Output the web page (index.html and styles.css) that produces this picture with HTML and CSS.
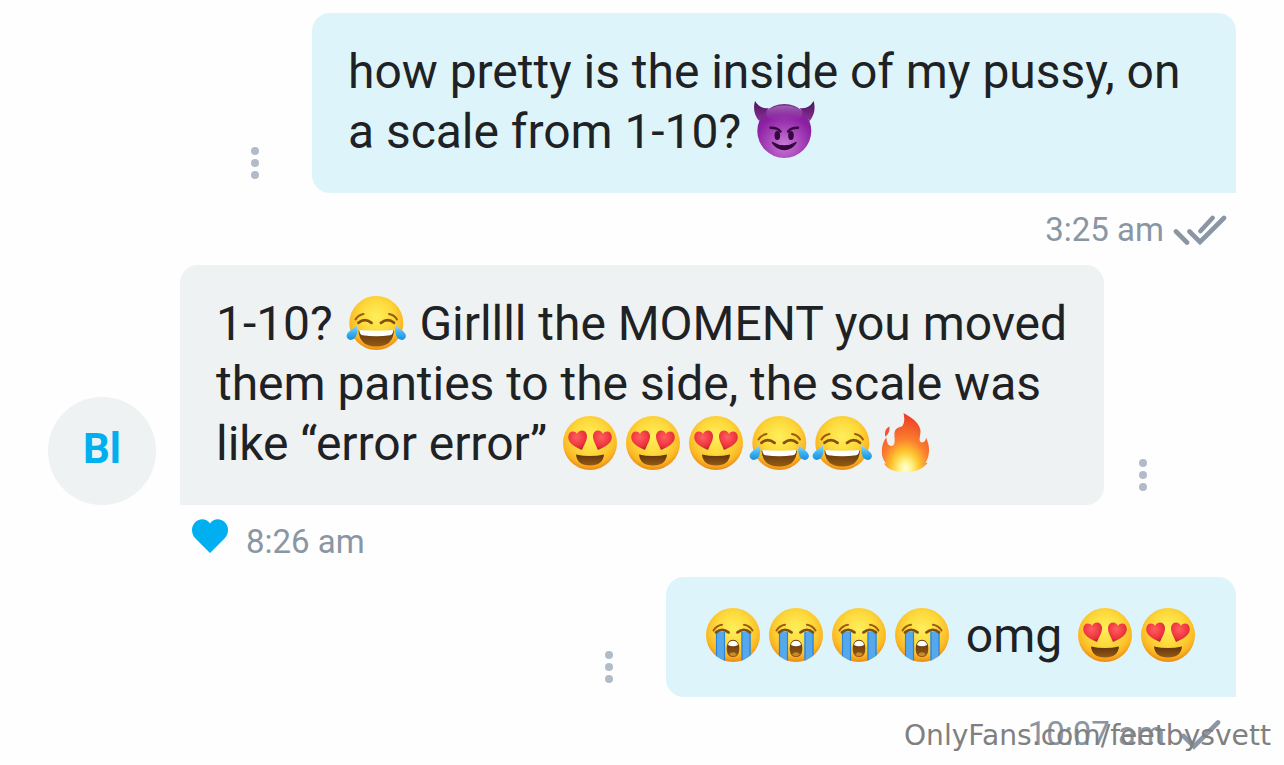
FILE: index.html
```
<!DOCTYPE html>
<html lang="en">
<head>
    <meta charset="UTF-8">
    <meta name="viewport" content="width=device-width, initial-scale=1.0">
    <title>Messages</title>
    <link rel="stylesheet" href="styles.css">
</head>
<body>
    <!-- emoji and icon shapes -->
    <svg class="sprite" width="0" height="0">
        <defs>
            <radialGradient id="yellow" cx="50%" cy="38%" r="64%">
                <stop offset="0" stop-color="#ffef5c"/>
                <stop offset=".5" stop-color="#fdd83a"/>
                <stop offset=".8" stop-color="#fbb724"/>
                <stop offset="1" stop-color="#e8800e"/>
            </radialGradient>
            <radialGradient id="purple" cx="50%" cy="76%" r="74%">
                <stop offset="0" stop-color="#c97ad6"/>
                <stop offset=".4" stop-color="#aa48bb"/>
                <stop offset=".75" stop-color="#8b1fa3"/>
                <stop offset="1" stop-color="#742a8a"/>
            </radialGradient>
            <linearGradient id="shine" x1="0" y1="0" x2="0" y2="1">
                <stop offset="0" stop-color="#b88ac6" stop-opacity=".6"/>
                <stop offset="1" stop-color="#a040b0" stop-opacity="0"/>
            </linearGradient>
            <linearGradient id="horn" x1="0" y1="0" x2="0" y2="1">
                <stop offset="0" stop-color="#4a1458"/>
                <stop offset="1" stop-color="#8b2f98"/>
            </linearGradient>
            <linearGradient id="tear" x1="0" y1="0" x2="0" y2="1">
                <stop offset="0" stop-color="#9adcf8"/>
                <stop offset=".5" stop-color="#3fb4f0"/>
                <stop offset="1" stop-color="#1590e0"/>
            </linearGradient>
            <radialGradient id="red" cx="45%" cy="35%" r="65%">
                <stop offset="0" stop-color="#ff5f60"/>
                <stop offset=".7" stop-color="#ee343e"/>
                <stop offset="1" stop-color="#c91f2b"/>
            </radialGradient>
            <linearGradient id="mouth" x1="0" y1="0" x2="0" y2="1">
                <stop offset="0" stop-color="#5d340c"/>
                <stop offset="1" stop-color="#965a14"/>
            </linearGradient>
            <radialGradient id="fire" cx="50%" cy="94%" r="88%">
                <stop offset="0" stop-color="#fffde6"/>
                <stop offset=".14" stop-color="#fff58a"/>
                <stop offset=".34" stop-color="#ffc52e"/>
                <stop offset=".56" stop-color="#fb802f"/>
                <stop offset="1" stop-color="#ee4026"/>
            </radialGradient>
            <clipPath id="face"><circle cx="31" cy="28" r="27"/></clipPath>
        </defs>

        <symbol id="devil" viewBox="0 0 63 60">
            <path d="M2-2C0 5 1 12 6 18L16 5C9 6 5 3 2-2Z" fill="url(#horn)"/>
            <path d="M60.600-2C62.600 5 61.600 12 56.600 18L46.600 5C53.600 6 57.600 3 60.600-2Z" fill="url(#horn)"/>
            <circle cx="31.300" cy="28" r="27" fill="url(#purple)"/>
            <ellipse cx="31.300" cy="11" rx="18" ry="8.500" fill="url(#shine)"/>
            <path d="M17.500 24.800Q24 24.500 27.500 28.500M45 24.800Q38.500 24.500 35 28.500" class="line devil-line"/>
            <ellipse cx="24.300" cy="32.600" rx="2.800" ry="4.500" fill="#35083f"/>
            <ellipse cx="38" cy="32.600" rx="2.800" ry="4.500" fill="#35083f"/>
            <path d="M19.500 39.500Q31.300 46.500 43 39.500Q38.500 46.500 31.300 46.500T19.500 39.500Z" class="smile"/>
        </symbol>

        <symbol id="joy" viewBox="0 0 63 60">
            <circle cx="31.300" cy="28" r="27" fill="url(#yellow)"/>
            <path d="M10.500 24.500Q13 20 18.500 19M52 24.500Q49.500 20 44 19" class="line brow"/>
            <path d="M13.500 27.800Q19.500 22.500 26.500 27.800M36 27.800Q43 22.500 49 27.800" class="line eye"/>
            <path d="M13.500 35.500Q31.300 37 49 35.500Q48 51.500 31.300 51.500Q14.500 51.500 13.500 35.500Z" fill="url(#mouth)"/>
            <path d="M14.300 35Q31.300 36.500 48.300 35Q48.300 39.500 45 40.300Q31.300 42 17.500 40.300Q14.300 39.500 14.300 35Z" fill="#fff"/>
            <path d="M11.800 30Q13.500 40 9.500 43.500Q5 46.500 2.200 43C-.5 38 7 35 11.800 30Z" fill="url(#tear)"/>
            <path d="M50.800 30Q49.100 40 53.100 43.500Q57.600 46.500 60.400 43C63.100 38 55.600 35 50.800 30Z" fill="url(#tear)"/>
        </symbol>

        <symbol id="love" viewBox="0 0 63 60">
            <circle cx="31" cy="28" r="27" fill="url(#yellow)"/>
            <path d="M23 35C17 32.500 9 28.500 9.200 22C9.500 16 15.500 15 18 19C20 13.500 27.500 14.500 28 20.500C28.200 25.500 25 30 23 35Z" fill="url(#red)"/>
            <path d="M39 35C45 32.500 53 28.500 52.800 22C52.500 16 46.500 15 44 19C42 13.500 34.500 14.500 34 20.500C33.800 25.500 37 30 39 35Z" fill="url(#red)"/>
            <path d="M17 39.500Q31 42.500 45 39.500Q44 50.500 31 50.500Q18 50.500 17 39.500Z" fill="url(#mouth)"/>
        </symbol>

        <symbol id="sob" viewBox="0 0 63 60">
            <circle cx="31" cy="28" r="27" fill="url(#yellow)"/>
            <g clip-path="url(#face)">
                <path d="M14 25H23V56H14ZM39.500 25H48.500V56H39.500Z" fill="#55a8ec"/>
                <path d="M14.500 25V56M22.500 25V56M40 25V56M48 25V56" stroke="#2b84d5" stroke-width="1.200"/>
            </g>
            <path d="M11.500 23.500Q14.500 18.500 20 17.800M50.500 23.500Q47.500 18.500 42 17.800" class="line brow"/>
            <path d="M14 25.300Q20 20.500 26.500 25.300M35.500 25.300Q42 20.500 48 25.300" class="line eye"/>
            <path d="M24.700 41.500C24.700 35.500 27.500 32.700 31 32.700S37.300 35.500 37.300 41.500S35 50 31 50S24.700 47.500 24.700 41.500Z" fill="url(#mouth)"/>
            <path d="M26 38C26.500 35 28.500 33.700 31 33.700S35.500 35 36 38Q31 40.500 26 38Z" fill="#fff"/>
            <path d="M27 47.500Q31 43 35 47.500Q31 51 27 47.500Z" fill="#c98a2c"/>
        </symbol>

        <symbol id="flame" viewBox="0 0 63 60">
            <path d="M29.500-2C39 3 46 9 46.500 16C46.700 20 44.500 25 46.500 27C49.500 28.500 52 26 52 22.500C54.500 28 56 34 54.500 40C54 43 53 45 51.500 47.500L53.500 48C49 54 41 57.300 31.500 57.300C22 57.300 13 54.500 10 48.500L12 48.500C9 45 7.700 41 7.800 36C8 30 9.500 26 12.500 22.300C12.500 27 14 31 17.500 31C22.500 30 20 24 20.500 18C21 14 24 12 28 11.500C31 8 30.500 3 29.500-2Z" fill="url(#fire)"/>
            <path d="M15.500 11.500C16 16 14.500 19 11.300 21.800C10.300 17 11.500 13.500 15.500 11.500Z" fill="#f0523a"/>
        </symbol>
    </svg>

    <div class="chat">
        <div class="message out">
            <div class="row">
                <div class="more"><i></i><i></i><i></i></div>
                <div class="bubble">how pretty is the inside of my pussy, on a scale from 1-10? <svg class="emoji"><use href="#devil"/></svg></div>
            </div>
            <div class="info">
                <span class="time">3:25 am</span>
                <svg class="check" width="54" height="32" viewBox="0 0 54 32">
                    <path d="M3 17.500L14 28.500M16.500 17.500L27 28L51 4M27.500 17L39.500 4"/>
                </svg>
            </div>
        </div>

        <div class="message in">
            <div class="avatar">Bl</div>
            <div class="content">
                <div class="row">
                    <div class="bubble">1-10? <svg class="emoji"><use href="#joy"/></svg> Girllll the MOMENT you moved them panties to the side, the scale was like “error error” <span class="group"><svg class="emoji"><use href="#love"/></svg><svg class="emoji"><use href="#love"/></svg><svg class="emoji"><use href="#love"/></svg><svg class="emoji"><use href="#joy"/></svg><svg class="emoji"><use href="#joy"/></svg><svg class="emoji"><use href="#flame"/></svg></span></div>
                    <div class="more"><i></i><i></i><i></i></div>
                </div>
                <div class="info">
                    <svg class="heart" width="36" height="34" viewBox="0 0 36 34">
                        <path d="M18 34L3.500 19.500C-1 15-1 8 2.500 4C7-1 14-1 18 4.500C22-1 29-1 33.500 4C37 8 37 15 32.500 19.500Z"/>
                    </svg>
                    <span class="time">8:26 am</span>
                </div>
            </div>
        </div>

        <div class="message out">
            <div class="row">
                <div class="more"><i></i><i></i><i></i></div>
                <div class="bubble short"><svg class="emoji"><use href="#sob"/></svg><svg class="emoji"><use href="#sob"/></svg><svg class="emoji"><use href="#sob"/></svg><svg class="emoji"><use href="#sob"/></svg> omg <svg class="emoji"><use href="#love"/></svg><svg class="emoji"><use href="#love"/></svg></div>
            </div>
            <div class="info sent">
                <span class="time">10:07 am</span>
                <svg class="check" width="42" height="32" viewBox="0 0 42 32">
                    <path d="M4.500 18L15 28.500L39 4.500"/>
                </svg>
            </div>
        </div>
    </div>

    <div class="watermark">OnlyFans.com/feetbysvett</div>
</body>
</html>
```
FILE: styles.css
```
*{
    margin: 0;
    padding: 0;
    box-sizing: border-box;
}
body{
    position: relative;
    height: 765px;
    overflow: hidden;
    background: #fefefe;
    font-family: Roboto, sans-serif;
    color: #1f2224;
}
.sprite{
    position: absolute;
}
.chat{
    padding: 13px 48px 0;
}
.message .row{
    display: flex;
    align-items: flex-end;
}
.message.out .row{
    justify-content: flex-end;
}
.bubble{
    width: 924px;
    padding: 29px 36px 31px;
    border-radius: 18px;
    font-size: 48px;
    line-height: 60px;
    letter-spacing: -0.04px;
}
.bubble.short{
    width: 570px;
    white-space: nowrap;
}
.out .bubble{
    background: #ddf5fa;
    border-bottom-right-radius: 0;
}
.in .bubble{
    padding-right: 34px;
    background: #eef2f3;
    border-bottom-left-radius: 0;
}
.emoji{
    display: inline-block;
    width: 63px;
    height: 60px;
    vertical-align: top;
    overflow: visible;
    transform: translateY(1px);
}
symbol{
    overflow: visible;
}
.group{
    white-space: nowrap;
}
.line{
    fill: none;
    stroke-linecap: round;
}
.devil-line{
    stroke: #35083f;
    stroke-width: 2.4;
}
.smile{
    fill: #35083f;
    stroke: #35083f;
    stroke-width: 1.4;
    stroke-linejoin: round;
}
.brow{
    stroke: #9a5c12;
    stroke-width: 2;
}
.eye{
    stroke: #84500f;
    stroke-width: 2.8;
}

/* three dots menu */
.more{
    display: flex;
    flex-direction: column;
    gap: 4px;
    padding-bottom: 14px;
}
.out .more{
    margin-right: 53px;
}
.in .more{
    margin-left: 35px;
}
.more i{
    width: 8px;
    height: 8px;
    border-radius: 50%;
    background: #b2bcc8;
}

.message.in{
    display: flex;
}
.avatar{
    width: 108px;
    height: 108px;
    margin: 132px 24px 0 0;
    border-radius: 50%;
    background: #eef2f3;
    color: #00aff0;
    font-size: 42px;
    font-weight: 700;
    line-height: 103px;
    text-align: center;
}
.info{
    display: flex;
    align-items: center;
    height: 72px;
    padding-top: 2px;
    color: #8a96a3;
}
.out .info{
    justify-content: flex-end;
    padding-right: 9px;
}
.out .info.sent{
    height: 68px;
    padding-right: 15px;
    padding-top: 6px;
}
.in .info{
    padding-left: 12px;
}
.time{
    font-size: 33px;
    line-height: 40px;
}
.check{
    margin-left: 9px;
}
.sent .check{
    margin-left: 14px;
}
.check path{
    fill: none;
    stroke: #8a96a3;
    stroke-width: 4.6;
    stroke-linecap: round;
}
.heart{
    margin: 0 18px 12px 0;
}
.heart path{
    fill: #00aff0;
}
.watermark{
    position: absolute;
    right: 13px;
    bottom: 11px;
    color: #808080;
    font-family: "DejaVu Sans", sans-serif;
    font-size: 28.15px;
    line-height: 36px;
}
```
